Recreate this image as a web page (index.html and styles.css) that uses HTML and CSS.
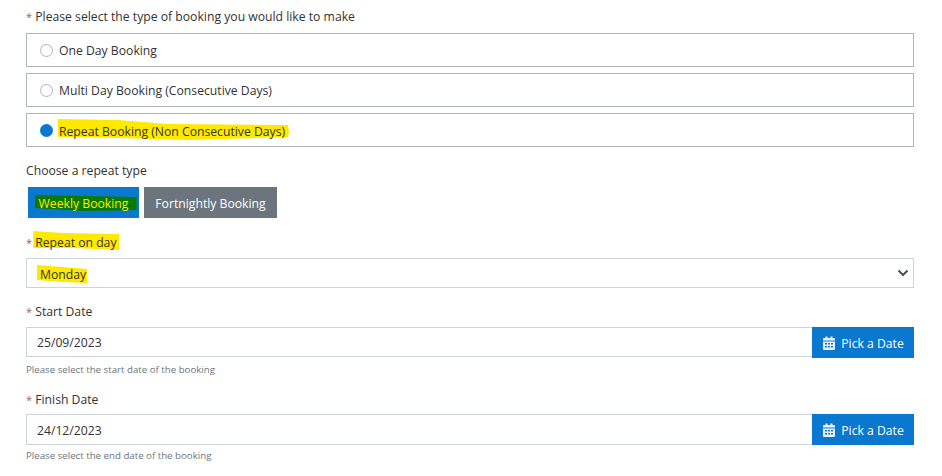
FILE: index.html
```html
<!DOCTYPE html>
<html lang="en">
<head>
<meta charset="utf-8">
<title>Booking type</title>
<link rel="stylesheet" href="styles.css">
</head>
<body>
<form class="form">
  <div class="label first"><span class="req">*</span> Please select the type of booking you would like to make</div>
  <div class="options">
    <div class="option"><span class="radio"></span><span class="txt">One Day Booking</span></div>
    <div class="option"><span class="radio"></span><span class="txt">Multi Day Booking (Consecutive Days)</span></div>
    <div class="option"><span class="radio on"></span><span class="txt hl hl-repeat">Repeat Booking (Non Consecutive Days)</span></div>
  </div>
  <div class="label choose">Choose a repeat type</div>
  <div class="btns">
    <span class="btn blue"><span class="hl hl-green">Weekly Booking</span></span>
    <span class="btn grey">Fortnightly Booking</span>
  </div>
  <div class="label day"><span class="req">*</span> <span class="hl hl-day">Repeat on day</span></div>
  <div class="select">
    <span class="txt hl hl-mon">Monday</span>
    <svg class="chev" width="12" height="8" viewBox="0 0 12 8"><path d="M1.500 1.500 6 6l4.500-4.500" fill="none" stroke="#4b5158" stroke-width="2"/></svg>
  </div>
  <div class="label date-start"><span class="req">*</span> Start Date</div>
  <div class="group">
    <div class="input">25/09/2023</div>
    <span class="pick">
      <svg class="cal" width="12" height="14" viewBox="0 0 12 14"><path fill="#eaf3fb" d="M1 2h1.500V.5h2V2h3V.5h2V2H11a1 1 0 0 1 1 1v1.500H0V3a1 1 0 0 1 1-1Z"/><path fill="#eaf3fb" fill-rule="evenodd" d="M0 5.500h12V13a1 1 0 0 1-1 1H1a1 1 0 0 1-1-1V5.500ZM2 7v1.500h2V7H2Zm3 0v1.500h2V7H5Zm3 0v1.500h2V7H8Zm-6 3v1.500h2V10H2Zm3 0v1.500h2V10H5Zm3 0v1.500h2V10H8Z"/></svg>
      <span>Pick a Date</span>
    </span>
  </div>
  <div class="help">Please select the start date of the booking</div>
  <div class="label date"><span class="req">*</span> Finish Date</div>
  <div class="group group-end">
    <div class="input">24/12/2023</div>
    <span class="pick">
      <svg class="cal" width="12" height="14" viewBox="0 0 12 14"><path fill="#eaf3fb" d="M1 2h1.500V.5h2V2h3V.5h2V2H11a1 1 0 0 1 1 1v1.500H0V3a1 1 0 0 1 1-1Z"/><path fill="#eaf3fb" fill-rule="evenodd" d="M0 5.500h12V13a1 1 0 0 1-1 1H1a1 1 0 0 1-1-1V5.500ZM2 7v1.500h2V7H2Zm3 0v1.500h2V7H5Zm3 0v1.500h2V7H8Zm-6 3v1.500h2V10H2Zm3 0v1.500h2V10H5Zm3 0v1.500h2V10H8Z"/></svg>
      <span>Pick a Date</span>
    </span>
  </div>
  <div class="help help-end">Please select the end date of the booking</div>
</form>
</body>
</html>
```
FILE: styles.css
```css
* { box-sizing: border-box; }
html, body { margin: 0; padding: 0; background: #fff; }
body { font-family: "Open Sans", "Noto Sans", sans-serif; font-size: 12.2px; line-height: 18px; color: #333; overflow: hidden; }
.form { width: 888px; margin-left: 26px; }
.label { height: 18px; }
.first { margin-top: 8px; }
.req { color: #8a6468; font-size: 11px; }
.options { display: flex; flex-direction: column; gap: 6px; margin-top: 7px; }
.option { height: 34px; border: 1px solid #adb5bd; display: flex; align-items: center; gap: 6px; padding-left: 13px; }
.txt { padding-top: 2px; }
.radio { width: 13px; height: 13px; border: 1px solid #adb5bd; border-radius: 50%; background: #fff; }
.radio.on { border: 0; background: #0b78d0; }
.hl { display: inline-block; position: relative; z-index: 0; }
.hl::before { content: ""; position: absolute; z-index: -1; background: #ffe900; }
.hl-repeat { padding-top: 4px; }
.hl-repeat::before { left: -1px; top: 0; width: 231px; height: 21px; clip-path: polygon(0 0, 60px 1px, 110px 5px, 230px 6px, 231px 13px, 230px 18px, 130px 21px, 60px 19px, 0 18px); }
.hl-green { color: #f4f000; }
.hl-green::before { background: #0a7a00; left: -4px; top: 0; width: 102px; height: 17px; clip-path: polygon(0 0, 102px 2px, 102px 15px, 50px 16px, 0 13px); }
.hl-day::before { left: -2px; top: -3px; width: 86px; height: 19px; clip-path: polygon(0 0, 30px 2px, 86px 3px, 86px 19px, 40px 17px, 0 17px); }
.hl-mon { padding-top: 4px; }
.hl-mon::before { left: -3px; top: 3px; width: 50px; height: 18px; clip-path: polygon(0 0, 50px 4px, 50px 18px, 25px 17px, 0 15px); }
.choose { margin-top: 15px; }
.btns { display: flex; gap: 5px; margin-top: 7px; margin-left: 2px; }
.btn { height: 31px; padding-top: 3px; display: flex; align-items: center; justify-content: center; color: #fff; }
.blue { width: 111px; background: #0b78d0; }
.grey { width: 133px; background: #6c757d; }
.day { margin-top: 16px; }
.select { height: 30px; margin-top: 6px; border: 1px solid #ced4da; display: flex; align-items: center; justify-content: space-between; padding: 0 4px 0 13px; }
.chev { display: block; }
.date-start { margin-top: 15px; }
.date { margin-top: 14px; }
.group { display: flex; height: 31px; margin-top: 6px; }
.group-end { margin-top: 5px; }
.input { flex: 1; height: 30px; border: 1px solid #ced4da; border-right: 0; display: flex; align-items: center; padding-left: 10px; padding-top: 1px; }
.group-end .input { height: 31px; padding-top: 2px; }
.pick { width: 102px; background: #0b78d0; color: #fff; display: flex; align-items: center; justify-content: center; gap: 6px; padding-left: 1px; }
.pick span { padding-top: 2px; }
.cal { display: block; }
.help { font-size: 9.7px; color: #6c757d; line-height: 14px; margin-top: 5px; }
.help-end { margin-top: 4px; }
```
